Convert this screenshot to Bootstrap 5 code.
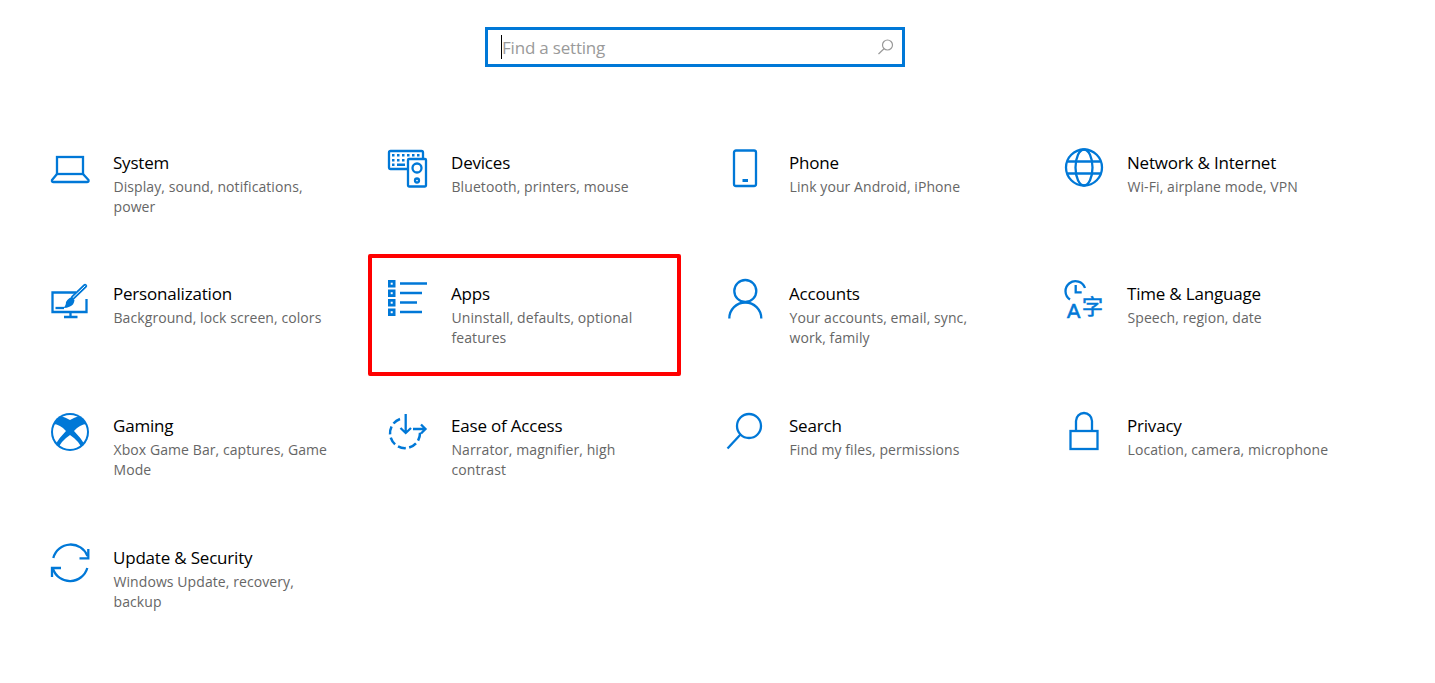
<!DOCTYPE html>
<html lang="en">
<head>
  <meta charset="UTF-8">
  <title>Settings</title>
  <link href="https://cdn.jsdelivr.net/npm/bootstrap@5.3.3/dist/css/bootstrap.min.css" rel="stylesheet">
  <style>
    body {
      background-color: #fff;
      font-family: "Open Sans", "Noto Sans", sans-serif;
      overflow: hidden;
    }
    .search-wrap {
      width: 1390px;
      padding-top: 27px;
    }
    .search-box {
      width: 420px;
      height: 40px;
      border: 3px solid #0078d7;
      padding: 0 7px 0 13px;
    }
    .search-caret {
      width: 1px;
      height: 24px;
      background-color: #000;
      flex: none;
    }
    .search-input {
      border: 0;
      outline: 0;
      padding: 2px 0 0 0;
      font-size: 17px;
      letter-spacing: -0.2px;
      background: transparent;
      min-width: 0;
    }
    .search-input::placeholder {
      color: #9a9a9a;
      opacity: 1;
    }
    .settings-grid {
      width: 1352px;
      margin-left: 50px;
      margin-top: 81px;
    }
    .tile {
      height: 132px;
    }
    .tile:nth-child(-n+4) {
      height: 131px;
    }
    .tile:nth-child(n+5):nth-child(-n+8) .tile-icon {
      margin-top: 1px;
    }
    .tile-icon {
      width: 40px;
      height: 44px;
      flex: none;
      margin-right: 23px;
      fill: none;
      stroke: #0078d7;
      stroke-width: 2.3;
      overflow: visible;
    }
    .tile-icon .solid {
      fill: #0078d7;
      stroke: none;
    }
    .tile-icon .cut {
      fill: #fff;
      stroke: none;
    }
    .tile-icon text {
      fill: #0078d7;
      stroke-width: 0.6;
    }
    .tile-text {
      padding-top: 3px;
      max-width: 215px;
    }
    .tile-title {
      font-size: 17px;
      line-height: 24px;
      color: #000;
      letter-spacing: -0.2px;
    }
    .tile-desc {
      font-size: 14px;
      line-height: 20px;
      margin-top: 2px;
      margin-left: 0.5px;
      letter-spacing: 0.08px;
      color: #666;
    }
    .callout {
      position: absolute;
      left: -20px;
      top: -25px;
      width: 313px;
      height: 122px;
      border: 4px solid #f00;
      border-radius: 2px;
      pointer-events: none;
    }
  </style>
</head>
<body>
  <div class="search-wrap d-flex justify-content-center">
    <div class="search-box d-flex align-items-center">
      <span class="search-caret"></span>
      <input class="search-input flex-grow-1" type="text" placeholder="Find a setting">
      <svg width="18" height="18" viewBox="0 0 18 18" fill="none" stroke="#999" stroke-width="1.2">
        <circle cx="10.5" cy="7" r="5"/>
        <path d="M7 10.8 1.5 16"/>
      </svg>
    </div>
  </div>

  <div class="settings-grid row g-0">
    <!-- row 1 -->
    <div class="col-3 tile d-flex position-relative">
      <svg class="tile-icon" viewBox="0 0 40 44">
        <rect x="7" y="9" width="26" height="17"/>
        <path d="M7 26 2 32Q1.500 34 3.500 34H37Q39 34 38.500 32L33 26"/>
      </svg>
      <div class="tile-text">
        <div class="tile-title">System</div>
        <div class="tile-desc">Display, sound, notifications, power</div>
      </div>
    </div>
    <div class="col-3 tile d-flex position-relative">
      <svg class="tile-icon" viewBox="0 0 40 44">
        <path d="M19 21H2.500Q1 21 1 19.500V4.500Q1 3 2.500 3H33.500Q35 3 35 4.500V10"/>
        <rect x="20" y="11" width="18" height="27.500" rx="1"/>
        <circle cx="29" cy="20" r="4.500"/>
        <circle cx="29" cy="32.500" r="2"/>
        <rect class="solid" x="4" y="6" width="2.500" height="2.500"/>
        <rect class="solid" x="9" y="6" width="2.500" height="2.500"/>
        <rect class="solid" x="14" y="6" width="2.500" height="2.500"/>
        <rect class="solid" x="19" y="6" width="2.500" height="2.500"/>
        <rect class="solid" x="24" y="6" width="2.500" height="2.500"/>
        <rect class="solid" x="29" y="6" width="2.500" height="2.500"/>
        <rect class="solid" x="4" y="11" width="2.500" height="2.500"/>
        <rect class="solid" x="9" y="11" width="2.500" height="2.500"/>
        <rect class="solid" x="14" y="11" width="2.500" height="2.500"/>
        <rect class="solid" x="4" y="15.500" width="2.500" height="2.500"/>
        <rect class="solid" x="9" y="15.500" width="8" height="2.500"/>
      </svg>
      <div class="tile-text">
        <div class="tile-title">Devices</div>
        <div class="tile-desc">Bluetooth, printers, mouse</div>
      </div>
    </div>
    <div class="col-3 tile d-flex position-relative">
      <svg class="tile-icon" viewBox="0 0 40 44">
        <rect x="8" y="2.500" width="22" height="35.500" rx="2"/>
        <rect class="solid" x="16.500" y="31" width="5.500" height="3"/>
      </svg>
      <div class="tile-text">
        <div class="tile-title">Phone</div>
        <div class="tile-desc">Link your Android, iPhone</div>
      </div>
    </div>
    <div class="col-3 tile d-flex position-relative">
      <svg class="tile-icon" viewBox="0 0 40 44">
        <circle cx="20" cy="19.500" r="18"/>
        <ellipse cx="20" cy="19.500" rx="8.500" ry="18"/>
        <path d="M4 13.500H36M4 25.500H36"/>
      </svg>
      <div class="tile-text">
        <div class="tile-title">Network &amp; Internet</div>
        <div class="tile-desc">Wi-Fi, airplane mode, VPN</div>
      </div>
    </div>

    <!-- row 2 -->
    <div class="col-3 tile d-flex position-relative">
      <svg class="tile-icon" viewBox="0 0 40 44">
        <path d="M26 12.500H2.500V32H36.500V19"/>
        <path d="M20.500 32V37M14 37H27.500"/>
        <path d="M5.500 28H14"/>
        <path d="M35 6 23 17.500" stroke-width="4.400" stroke-linecap="round"/>
        <path d="M35 6 23 17.500" stroke="#fff" stroke-width="1" stroke-linecap="round"/>
        <path class="solid" d="M16 22Q19 17 22 17.500L24.500 20Q24 25 20 26.500 17 28 13 28 16 26 16 22Z"/>
      </svg>
      <div class="tile-text">
        <div class="tile-title">Personalization</div>
        <div class="tile-desc">Background, lock screen, colors</div>
      </div>
    </div>
    <div class="col-3 tile d-flex position-relative">
      <svg class="tile-icon" viewBox="0 0 40 44">
        <rect class="solid" x="0" y="0" width="7.500" height="7.500"/>
        <rect class="solid" x="0" y="9.500" width="7.500" height="7.500"/>
        <rect class="solid" x="0" y="19" width="7.500" height="7.500"/>
        <rect class="solid" x="0" y="28.500" width="7.500" height="7.500"/>
        <rect class="cut" x="2.700" y="2.700" width="2" height="2"/>
        <rect class="cut" x="2.700" y="12.200" width="2" height="2"/>
        <rect class="cut" x="2.700" y="21.700" width="2" height="2"/>
        <rect class="cut" x="2.700" y="31.200" width="2" height="2"/>
        <path d="M12 3.500H39M12 13H34M12 22.500H29M12 32H34"/>
      </svg>
      <div class="tile-text">
        <div class="tile-title">Apps</div>
        <div class="tile-desc">Uninstall, defaults, optional features</div>
      </div>
      <div class="callout"></div>
    </div>
    <div class="col-3 tile d-flex position-relative">
      <svg class="tile-icon" viewBox="0 0 40 44">
        <circle cx="19.300" cy="11" r="11"/>
        <path d="M3.300 38.500A16 16 0 0 1 35.300 38.500"/>
      </svg>
      <div class="tile-text">
        <div class="tile-title">Accounts</div>
        <div class="tile-desc">Your accounts, email, sync, work, family</div>
      </div>
    </div>
    <div class="col-3 tile d-flex position-relative">
      <svg class="tile-icon" viewBox="0 0 40 44">
        <path d="M6 19.500A10 10 0 1 1 21 8"/>
        <path d="M11.700 5V12.300H17.700"/>
        <text x="3" y="37.500" font-family="Liberation Sans, sans-serif" font-size="20">A</text>
        <text x="18" y="34" font-family="Noto Sans CJK SC, sans-serif" font-size="21">字</text>
      </svg>
      <div class="tile-text">
        <div class="tile-title">Time &amp; Language</div>
        <div class="tile-desc">Speech, region, date</div>
      </div>
    </div>

    <!-- row 3 -->
    <div class="col-3 tile d-flex position-relative">
      <svg class="tile-icon" viewBox="0 0 40 44">
        <defs>
          <clipPath id="xboxClip"><circle cx="20" cy="21" r="17"/></clipPath>
        </defs>
        <circle class="solid" cx="20" cy="21" r="19"/>
        <g clip-path="url(#xboxClip)">
          <path class="cut" d="M2 13Q10 13 16 20 9 27 5 34L0 21Z"/>
          <path class="cut" d="M38 13Q30 13 24 20 31 27 35 34L40 21Z"/>
          <path class="cut" d="M20 24Q29 30 32 38H8Q11 30 20 24Z"/>
          <path class="cut" d="M10 5Q15 6 20 9 25 6 30 5L20 1Z"/>
        </g>
      </svg>
      <div class="tile-text">
        <div class="tile-title">Gaming</div>
        <div class="tile-desc">Xbox Game Bar, captures, Game Mode</div>
      </div>
    </div>
    <div class="col-3 tile d-flex position-relative">
      <svg class="tile-icon" viewBox="0 0 40 44">
        <path d="M12 8A15 15 0 1 0 32 21.500" stroke-width="2.500" stroke-dasharray="8 3.500"/>
        <path d="M17.700 3V22M12.500 17 17.700 22 23 17"/>
        <path d="M25 18H37M33 13.500 37.500 18 33 22.500"/>
      </svg>
      <div class="tile-text">
        <div class="tile-title">Ease of Access</div>
        <div class="tile-desc">Narrator, magnifier, high contrast</div>
      </div>
    </div>
    <div class="col-3 tile d-flex position-relative">
      <svg class="tile-icon" viewBox="0 0 40 44">
        <circle cx="23" cy="15" r="12"/>
        <path d="M14.500 23.500 1.500 37.500"/>
      </svg>
      <div class="tile-text">
        <div class="tile-title">Search</div>
        <div class="tile-desc">Find my files, permissions</div>
      </div>
    </div>
    <div class="col-3 tile d-flex position-relative">
      <svg class="tile-icon" viewBox="0 0 40 44">
        <rect x="6.500" y="20" width="27" height="18"/>
        <path d="M12 20V10A8 8 0 0 1 28 10V20"/>
      </svg>
      <div class="tile-text">
        <div class="tile-title">Privacy</div>
        <div class="tile-desc">Location, camera, microphone</div>
      </div>
    </div>

    <!-- row 4 -->
    <div class="col-3 tile d-flex position-relative">
      <svg class="tile-icon" viewBox="0 0 40 44">
        <path d="M3.300 15A18 18 0 0 1 37.500 13"/>
        <path d="M38.300 6V15.300H29.500"/>
        <path d="M37.300 25A18 18 0 0 1 3 26"/>
        <path d="M11 25H2V34"/>
      </svg>
      <div class="tile-text">
        <div class="tile-title">Update &amp; Security</div>
        <div class="tile-desc">Windows Update, recovery, backup</div>
      </div>
    </div>
  </div>
</body>
</html>
